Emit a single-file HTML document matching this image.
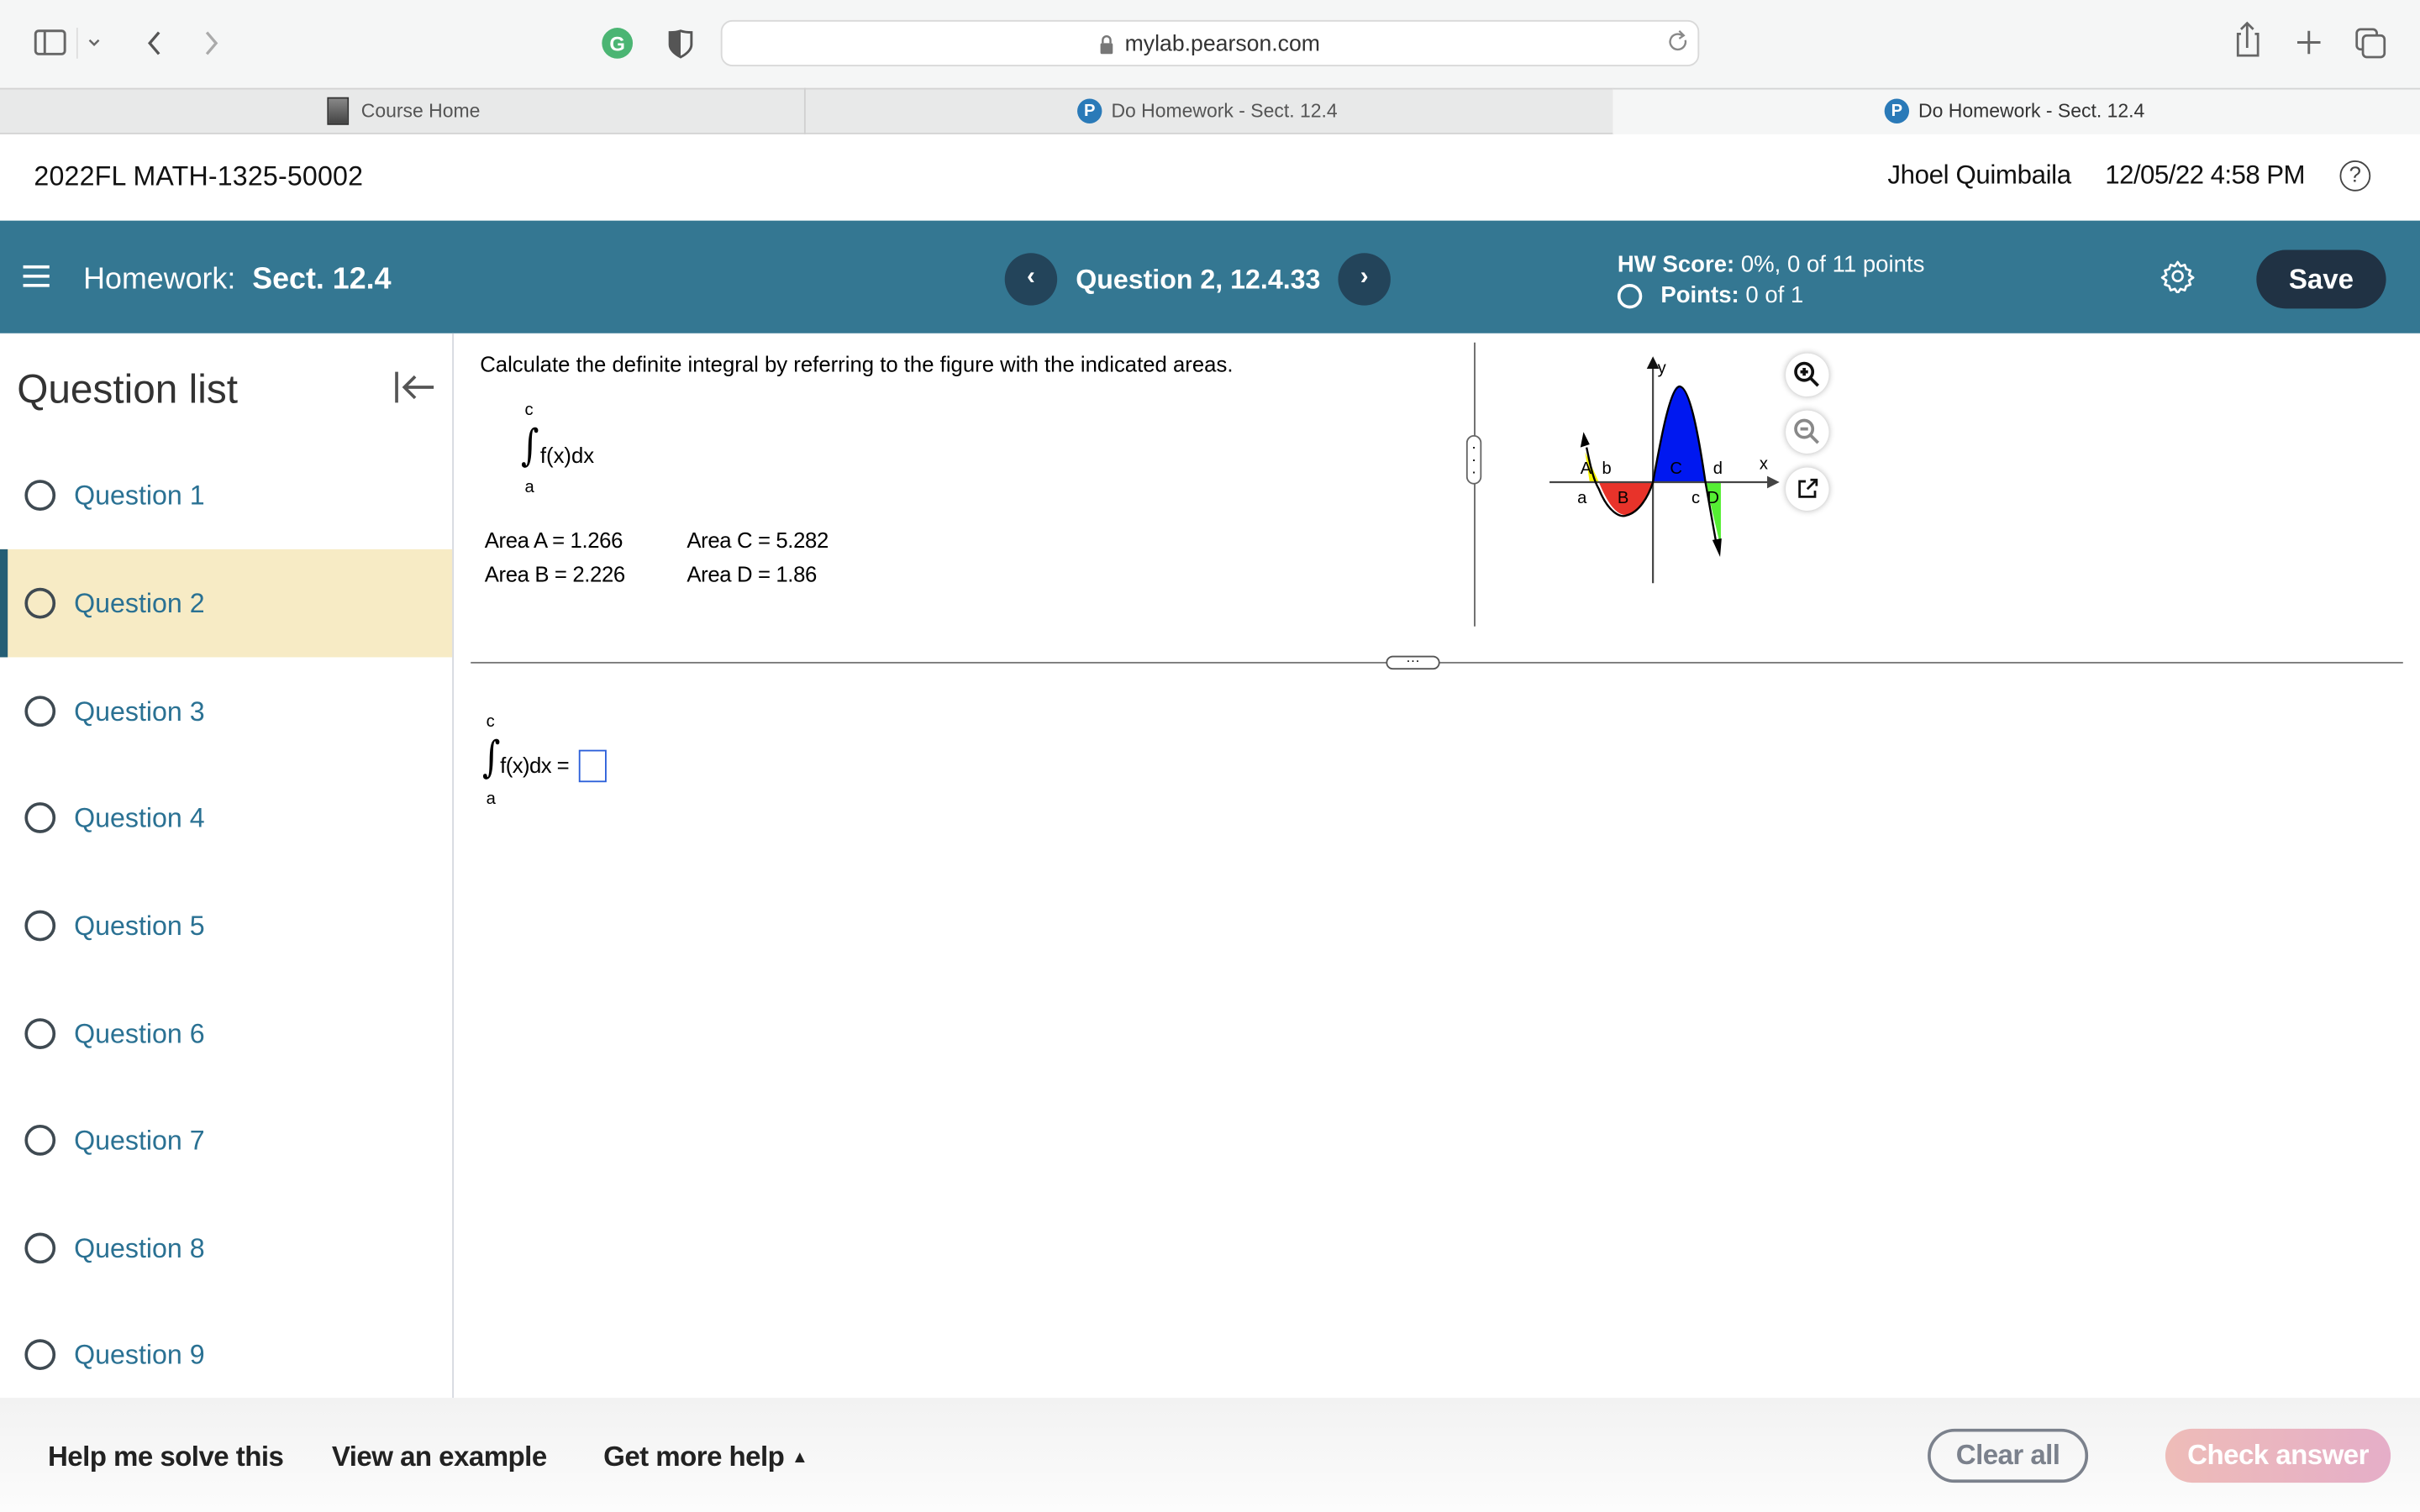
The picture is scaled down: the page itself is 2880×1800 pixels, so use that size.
<!DOCTYPE html>
<html><head><meta charset="utf-8">
<style>
*{box-sizing:border-box;margin:0;padding:0}
html,body{width:2880px;height:1800px;overflow:hidden;background:#fff}
#w{position:absolute;left:0;top:0;width:1568px;height:980px;transform:scale(1.836735);transform-origin:0 0;font-family:"Liberation Sans",sans-serif;color:#000}
.a{position:absolute}
.q{position:absolute;left:0;width:293px;height:70px;display:flex;align-items:center;font-size:17.5px;color:#2a7193}
.q i{display:inline-block;width:20px;height:20px;border:2.5px solid #3f4a52;border-radius:50%;margin:0 12px 0 16px}
</style></head><body><div id="w">
<div class="a" style="left:0;top:0;width:1568px;height:57px;background:#f5f6f6"></div>
<svg class="a" style="left:0;top:0" width="1568" height="57">
<rect x="23" y="20" width="19" height="15" rx="2" fill="none" stroke="#666" stroke-width="1.6"/><line x1="29" y1="20" x2="29" y2="35" stroke="#666" stroke-width="1.6"/>
<line x1="50" y1="18" x2="50" y2="38" stroke="#ddd"/>
<path d="M58 26 l3 3 l3 -3" fill="none" stroke="#666" stroke-width="1.3"/>
<path d="M103 21 l-6 7 l6 7" fill="none" stroke="#555" stroke-width="1.8"/>
<path d="M134 21 l6 7 l-6 7" fill="none" stroke="#aaa" stroke-width="1.8"/>
<circle cx="400" cy="28" r="10" fill="#4bb573"/><text x="400" y="33" font-size="13" font-weight="bold" fill="#fff" text-anchor="middle" font-family="Liberation Sans">G</text>
<path d="M441 20 c3 1 6 1 7 1 v8 c0 3 -3 6 -7 8 c-4 -2 -7 -5 -7 -8 v-8 c1 0 4 0 7 -1z" fill="none" stroke="#555" stroke-width="1.6"/><path d="M441 20 v17 c-4 -2 -7 -5 -7 -8 v-8 c1 0 4 0 7 -1z" fill="#555"/>
<rect x="467.5" y="13.5" width="633" height="29" rx="7" fill="#fff" stroke="#d9d9d9"/>
<rect x="713" y="28" width="8" height="7" rx="1" fill="#777"/><path d="M714.5 28 v-2 a2.5 2.5 0 0 1 5 0 v2" fill="none" stroke="#777" stroke-width="1.3"/>
<path d="M1092 26 a5 5 0 1 1 -2 -3" fill="none" stroke="#888" stroke-width="1.3"/><path d="M1088 20 l3 3 l-3 2" fill="none" stroke="#888" stroke-width="1.2"/>
<path d="M1452 22 h-2 v14 h13 v-14 h-2 M1456 31 v-15 M1452 19 l4 -4 l4 4" fill="none" stroke="#666" stroke-width="1.5"/>
<path d="M1496 20 v15 M1488.5 27.5 h15" stroke="#666" stroke-width="1.6"/>
<rect x="1527" y="19" width="13" height="13" rx="2.5" fill="none" stroke="#666" stroke-width="1.5"/><rect x="1531" y="23" width="14" height="14" rx="2.5" fill="#f5f6f6" stroke="#666" stroke-width="1.5"/>
</svg>
<div class="a" style="left:0;top:21px;width:1568px;text-align:center;font-size:14.5px;color:#333">&nbsp;&nbsp;&nbsp;&nbsp;mylab.pearson.com</div>
<div class="a" style="left:0;top:57px;width:1045px;height:30px;background:#e8e9e9;border-top:1px solid #d4d4d4;border-bottom:1px solid #d4d4d4"></div>
<div class="a" style="left:521px;top:57px;width:1px;height:30px;background:#d0d0d0"></div>
<div class="a" style="left:1045px;top:57px;width:1px;height:30px;background:#d0d0d0"></div>
<div class="a" style="left:1045px;top:57px;width:523px;height:30px;background:#f5f6f6;border-top:1px solid #d4d4d4"></div>
<div class="a" style="left:212px;top:63px;width:14px;height:18px;background:linear-gradient(#888,#444);border:1px solid #333"></div>
<div class="a" style="left:234px;top:65px;font-size:12.5px;color:#555">Course Home</div>
<div class="a" style="left:698px;top:64px;width:16px;height:16px;border-radius:50%;background:#2a7ab8;color:#fff;font-size:11px;font-weight:bold;text-align:center;line-height:16px">P</div>
<div class="a" style="left:720px;top:65px;font-size:12.5px;color:#555">Do Homework - Sect. 12.4</div>
<div class="a" style="left:1221px;top:64px;width:16px;height:16px;border-radius:50%;background:#2a7ab8;color:#fff;font-size:11px;font-weight:bold;text-align:center;line-height:16px">P</div>
<div class="a" style="left:1243px;top:65px;font-size:12.5px;color:#333">Do Homework - Sect. 12.4</div>
<div class="a" style="left:22px;top:104px;font-size:17.5px;color:#111;letter-spacing:.1px">2022FL MATH-1325-50002</div>
<div class="a" style="left:1223px;top:104px;font-size:17px;color:#111;letter-spacing:-.2px">Jhoel Quimbaila</div>
<div class="a" style="left:1364px;top:104px;font-size:17px;color:#111;letter-spacing:-.3px">12/05/22 4:58 PM</div>
<div class="a" style="left:1516px;top:104px;width:20px;height:20px;border:1.6px solid #444;border-radius:50%;font-size:14px;text-align:center;line-height:17px;color:#444">?</div>
<div class="a" style="left:0;top:143px;width:1568px;height:73px;background:#347792"></div>
<div class="a" style="left:15px;top:172px;width:17px;height:2px;background:#fff;box-shadow:0 6px 0 #fff,0 12px 0 #fff"></div>
<div class="a" style="left:54px;top:170px;font-size:19.5px;color:#fff">Homework:&nbsp; <b>Sect. 12.4</b></div>
<div class="a" style="left:651px;top:164px;width:34px;height:34px;border-radius:50%;background:#23445a;color:#fff;text-align:center;line-height:32px;font-size:16px;font-weight:bold">‹</div>
<div class="a" style="left:697px;top:171px;font-size:17.5px;font-weight:bold;color:#fff">Question 2, 12.4.33</div>
<div class="a" style="left:867px;top:164px;width:34px;height:34px;border-radius:50%;background:#23445a;color:#fff;text-align:center;line-height:32px;font-size:16px;font-weight:bold">›</div>
<div class="a" style="left:1048px;top:163px;font-size:15px;color:#fff"><b>HW Score:</b> 0%, 0 of 11 points</div>
<div class="a" style="left:1048px;top:184px;width:16px;height:16px;border:2px solid #fff;border-radius:50%"></div>
<div class="a" style="left:1076px;top:183px;font-size:15px;color:#fff"><b>Points:</b> 0 of 1</div>
<svg class="a" style="left:1400px;top:168px" width="22" height="22" viewBox="0 0 24 24"><path d="M12 2 l2 3 3-1 1 3 3 1-1 3 3 2-3 2 1 3-3 1-1 3-3-1-2 3-2-3-3 1-1-3-3-1 1-3-3-2 3-2-1-3 3-1 1-3 3 1z" fill="none" stroke="#fff" stroke-width="1.6" stroke-linejoin="round"/><circle cx="12" cy="12" r="3.5" fill="none" stroke="#fff" stroke-width="1.6"/></svg>
<div class="a" style="left:1462px;top:162px;width:84px;height:38px;border-radius:19px;background:#203244;color:#fff;font-weight:bold;font-size:18px;text-align:center;line-height:38px">Save</div>
<div class="a" style="left:293px;top:216px;width:1px;height:690px;background:#d6d9e0"></div>
<div class="a" style="left:11px;top:237px;font-size:26px;color:#333">Question list</div>
<svg class="a" style="left:255px;top:239px" width="28" height="24"><path d="M2 2 v20 M26 12 h-19 M14 5 l-7 7 l7 7" fill="none" stroke="#555" stroke-width="2"/></svg>
<div class="q" style="top:286px"><i></i>Question 1</div>
<div class="q" style="top:356px;background:#f7ebc5;border-left:5px solid #255e75"><i style="margin-left:11px"></i>Question 2</div>
<div class="q" style="top:426px"><i></i>Question 3</div>
<div class="q" style="top:495px"><i></i>Question 4</div>
<div class="q" style="top:565px"><i></i>Question 5</div>
<div class="q" style="top:635px"><i></i>Question 6</div>
<div class="q" style="top:704px"><i></i>Question 7</div>
<div class="q" style="top:774px"><i></i>Question 8</div>
<div class="q" style="top:843px"><i></i>Question 9</div>
<div class="a" style="left:311px;top:228px;font-size:14px">Calculate the definite integral by referring to the figure with the indicated areas.</div>
<div class="a" style="left:340px;top:260px;font-size:11px">c</div>
<div class="a" style="left:336px;top:272px;font-size:28px;font-family:'DejaVu Serif',serif;transform:scaleX(.8)">∫</div>
<div class="a" style="left:350px;top:287px;font-size:14px">f(x)dx</div>
<div class="a" style="left:340px;top:310px;font-size:11px">a</div>
<div class="a" style="left:314px;top:342px;font-size:14px;letter-spacing:-.2px">Area A = 1.266</div>
<div class="a" style="left:445px;top:342px;font-size:14px;letter-spacing:-.2px">Area C = 5.282</div>
<div class="a" style="left:314px;top:364px;font-size:14px;letter-spacing:-.2px">Area B = 2.226</div>
<div class="a" style="left:445px;top:364px;font-size:14px;letter-spacing:-.2px">Area D = 1.86</div>
<div class="a" style="left:955px;top:222px;width:1px;height:184px;background:#666"></div>
<div class="a" style="left:950px;top:282px;width:10px;height:32px;border:1px solid #666;border-radius:5px;background:#fff;font-size:10px;line-height:8px;text-align:center;padding-top:4px">·<br>·<br>·</div>
<svg class="a" style="left:995px;top:225px" width="160" height="160" viewBox="995 225 160 160">
<path d="M1027 293 L1030 312.5 L1036 312.5 Z" fill="#f5f200"/>
<path d="M1036 312.5 Q1053 355 1071 312.5 Z" fill="#e8332a"/>
<path d="M1071 312.5 C1078 270 1083 250 1088 250 C1094 250 1100 280 1105 312.5 Z" fill="#0018f0"/>
<path d="M1105 312.5 L1115 312.5 L1115 355 Z" fill="#55ee33"/>
<line x1="1004" y1="312.5" x2="1148" y2="312.5" stroke="#444" stroke-width="1.2"/>
<path d="M1153 312.5 l-8 -4 v8z" fill="#444"/>
<line x1="1071" y1="378" x2="1071" y2="237" stroke="#444" stroke-width="1.2"/>
<path d="M1071 231 l-4 8 h8z" fill="#111"/>
<path d="M1028 290 C1031 305 1033 312 1036 317 C1042 332 1050 336 1054 334 C1062 332 1068 322 1071 312.5 C1076 285 1082 252 1088 250.5 C1095 250 1101 285 1105 312.5 L1112 352" fill="none" stroke="#000" stroke-width="1.3"/>
<path d="M1026 280 l-2 10 l6 -2z" fill="#000"/>
<path d="M1114.5 361 l-5 -11 l6 -1z" fill="#000"/>
<g font-family="Liberation Sans" font-size="11"><text x="1074" y="242">y</text><text x="1140" y="304">x</text>
<text x="1024" y="307">A</text><text x="1038" y="307">b</text><text x="1022" y="326">a</text><text x="1048" y="326">B</text><text x="1082" y="307">C</text><text x="1110" y="307">d</text><text x="1096" y="326">c</text><text x="1106" y="326">D</text></g>
</svg>
<div class="a" style="left:1157px;top:229px;width:28px;height:28px;border-radius:50%;background:#fff;box-shadow:0 0 4px rgba(0,0,0,.3)"></div>
<svg class="a" style="left:1161px;top:233px" width="20" height="20"><circle cx="8" cy="8" r="5.5" fill="none" stroke="#111" stroke-width="2"/><path d="M12 12 l5 5 M5.5 8 h5 M8 5.5 v5" stroke="#111" stroke-width="2"/></svg>
<div class="a" style="left:1157px;top:266px;width:28px;height:28px;border-radius:50%;background:#fff;box-shadow:0 0 4px rgba(0,0,0,.3)"></div>
<svg class="a" style="left:1161px;top:270px" width="20" height="20"><circle cx="8" cy="8" r="5.5" fill="none" stroke="#888" stroke-width="2"/><path d="M12 12 l5 5 M5.5 8 h5" stroke="#888" stroke-width="2"/></svg>
<div class="a" style="left:1157px;top:303px;width:28px;height:28px;border-radius:50%;background:#fff;box-shadow:0 0 4px rgba(0,0,0,.3)"></div>
<svg class="a" style="left:1161px;top:307px" width="20" height="20"><path d="M9 5 h-4 v10 h10 v-4 M10 10 l6 -6 M12 4 h4 v4" fill="none" stroke="#111" stroke-width="1.5"/></svg>
<div class="a" style="left:305px;top:429px;width:1252px;height:1px;background:#777"></div>
<div class="a" style="left:898px;top:425px;width:35px;height:9px;border:1px solid #555;border-radius:5px;background:#fff;font-size:9px;line-height:4px;text-align:center">···</div>
<div class="a" style="left:315px;top:462px;font-size:11px">c</div>
<div class="a" style="left:311px;top:474px;font-size:28px;font-family:'DejaVu Serif',serif;transform:scaleX(.8)">∫</div>
<div class="a" style="left:324px;top:488px;font-size:14px;letter-spacing:-.3px">f(x)dx =</div>
<div class="a" style="left:375px;top:486px;width:18px;height:21px;border:1px solid #2b5fd9"></div>
<div class="a" style="left:315px;top:512px;font-size:11px">a</div>
<div class="a" style="left:0;top:906px;width:1568px;height:74px;background:linear-gradient(#f2f2f2,#fcfcfc)"></div>
<div class="a" style="left:31px;top:934px;font-size:18px;font-weight:bold;color:#222;letter-spacing:-.3px">Help me solve this</div>
<div class="a" style="left:215px;top:934px;font-size:18px;font-weight:bold;color:#222;letter-spacing:-.3px">View an example</div>
<div class="a" style="left:391px;top:934px;font-size:18px;font-weight:bold;color:#222;letter-spacing:-.3px">Get more help <span style="font-size:11px;vertical-align:2px">▲</span></div>
<div class="a" style="left:1249px;top:926px;width:104px;height:35px;border:2px solid #7b818c;border-radius:18px;color:#7b818c;font-weight:bold;font-size:18px;text-align:center;line-height:31px;letter-spacing:-.3px">Clear all</div>
<div class="a" style="left:1403px;top:926px;width:146px;height:35px;border-radius:18px;background:linear-gradient(90deg,#eebcb8,#e5aec8);color:#fff;font-weight:bold;font-size:18px;text-align:center;line-height:35px;letter-spacing:-.3px">Check answer</div>
</div></body></html>
